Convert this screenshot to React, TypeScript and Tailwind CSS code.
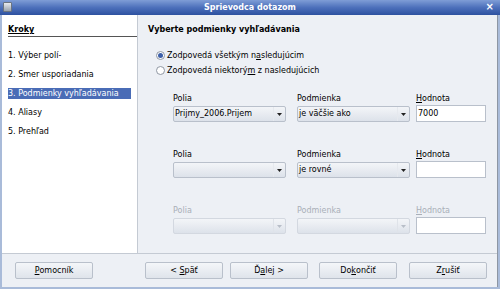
import React from "react";

const font = { fontFamily: '"DejaVu Sans", "Liberation Sans", sans-serif' };

function Combo({ text, disabled }: { text?: string; disabled?: boolean }) {
  return (
    <div
      className={`flex h-[16px] w-[113px] items-center rounded-[2px] border ${
        disabled ? "border-[#d3d8e0]" : "border-[#b9c0cb]"
      } bg-gradient-to-b from-[#f3f5f8] to-[#dde2ea]`}
    >
      <div className="flex-1 truncate pl-[1px] text-[8px] text-black">{text}</div>
      <div className={`flex h-full w-[12px] items-center justify-center border-l ${disabled ? "border-[#dfe3e9]" : "border-[#e6e9ee]"}`}>
        <svg width="5" height="3" viewBox="0 0 5 3">
          <path d="M0 0 H5 L2.5 3 Z" fill={disabled ? "#b8bec8" : "#222"} />
        </svg>
      </div>
    </div>
  );
}

function Input({ value }: { value?: string }) {
  return (
    <div className="flex h-[17px] w-[70px] items-center border border-[#b9c0cb] bg-white pl-[1px] text-[8px] text-black">
      {value}
    </div>
  );
}

function Row({ f, c, v, disabled }: { f?: string; c?: string; v?: string; disabled?: boolean }) {
  const lab = disabled ? "text-[#a9afb8]" : "text-black";
  return (
    <div className="flex items-start">
      <div className="flex w-[124px] flex-col gap-[2px]">
        <div className={`h-[10px] text-[8px] leading-[10px] ${lab}`}>Polia</div>
        <Combo text={f} disabled={disabled} />
      </div>
      <div className="flex w-[119px] flex-col gap-[2px]">
        <div className={`h-[10px] text-[8px] leading-[10px] ${lab}`}>Podmienka</div>
        <Combo text={c} disabled={disabled} />
      </div>
      <div className="flex flex-col gap-[1px]">
        <div className={`h-[10px] text-[8px] leading-[10px] ${lab}`}>
          <span className="underline">H</span>odnota
        </div>
        <Input value={v} />
      </div>
    </div>
  );
}

function Btn({ children, w = "w-[78px]" }: { children: React.ReactNode; w?: string }) {
  return (
    <div
      className={`flex h-[17px] ${w} items-center justify-center whitespace-pre rounded-[2px] border border-[#b9c0cb] bg-gradient-to-b from-[#f4f6f9] to-[#dfe4eb] text-[8px] text-black`}
    >
      {children}
    </div>
  );
}

export default function App() {
  return (
    <div className="flex h-[289px] w-[500px] flex-col bg-[#a9bbd9]" style={font}>
      {/* Title bar */}
      <div className="relative flex h-[15px] items-center justify-center bg-gradient-to-b from-[#7f9dd6] via-[#4d70bb] to-[#2d51a0]">
        <div className="absolute left-[3px] top-[2px] h-[10px] w-[9px] rounded-[1px] border border-[#6b7480] bg-gradient-to-b from-[#e8ebef] to-[#9aa3ae]" />
        <span className="text-[8px] font-bold text-white">Sprievodca dotazom</span>
        <span className="absolute right-[6px] top-[1px] text-[10px] font-bold leading-[12px] text-white">×</span>
      </div>
      {/* Body */}
      <div className="mx-[2px] mb-[2px] flex flex-1 flex-col border-r border-[#8d96a3] bg-[#edf0f5]">
        <div className="flex flex-1">
          {/* Left panel */}
          <div className="flex w-[136px] flex-col border-r border-[#c4cad3] bg-white">
            <div className="ml-[6px] mt-[9px] border-b border-[#555] pb-[1px] text-[8px] font-bold leading-[11px]">
              <span className="underline">Kroky</span>
            </div>
            <div className="ml-[6px] mt-[13px] flex flex-col gap-[8px] text-[8px] leading-[11px] text-black">
              <div>1. Výber polí-</div>
              <div>2. Smer usporiadania</div>
              <div className="mr-[6px] bg-[#4a6cb6] text-white">3. Podmienky vyhľadávania</div>
              <div>4. Aliasy</div>
              <div>5. Prehľad</div>
            </div>
          </div>
          {/* Right panel */}
          <div className="flex flex-1 flex-col pl-[10px] pt-[9px]">
            <div className="text-[8px] font-bold leading-[11px]">Vyberte podmienky vyhľadávania</div>
            <div className="ml-[8px] mt-[15px] flex flex-col gap-[4px] text-[8px] leading-[11px]">
              <div className="flex items-center gap-[2px]">
                <span className="flex h-[9px] w-[9px] items-center justify-center rounded-full border border-[#8f97a3] bg-white">
                  <span className="h-[5px] w-[5px] rounded-full bg-[#3d5fa8]" />
                </span>
                <span>
                  Zodpovedá všetkým n<span className="underline">a</span>sledujúcim
                </span>
              </div>
              <div className="flex items-center gap-[2px]">
                <span className="h-[9px] w-[9px] rounded-full border border-[#8f97a3] bg-white" />
                <span>
                  Zodpovedá niektorý<span className="underline">m</span> z nasledujúcich
                </span>
              </div>
            </div>
            <div className="ml-[25px] mt-[18px] flex flex-col gap-[28px]">
              <Row f="Prijmy_2006.Prijem" c="je väčšie ako" v="7000" />
              <Row c="je rovné" />
              <Row disabled />
            </div>
          </div>
        </div>
        {/* Button bar */}
        <div className="flex h-[34px] items-center border-t border-[#c4cad3] pl-[13px]">
          <Btn>
            <span className="underline">P</span>omocník
          </Btn>
          <div className="ml-[52px] flex gap-[7px]">
            <Btn>
              {"< "}
              <span className="underline">S</span>päť
            </Btn>
            <Btn>
              Ď<span className="underline">a</span>lej{" >"}
            </Btn>
          </div>
          <div className="ml-[11px] flex gap-[12px]">
            <Btn>
              Do<span className="underline">k</span>ončiť
            </Btn>
            <Btn>
              Z<span className="underline">r</span>ušiť
            </Btn>
          </div>
        </div>
      </div>
    </div>
  );
}
